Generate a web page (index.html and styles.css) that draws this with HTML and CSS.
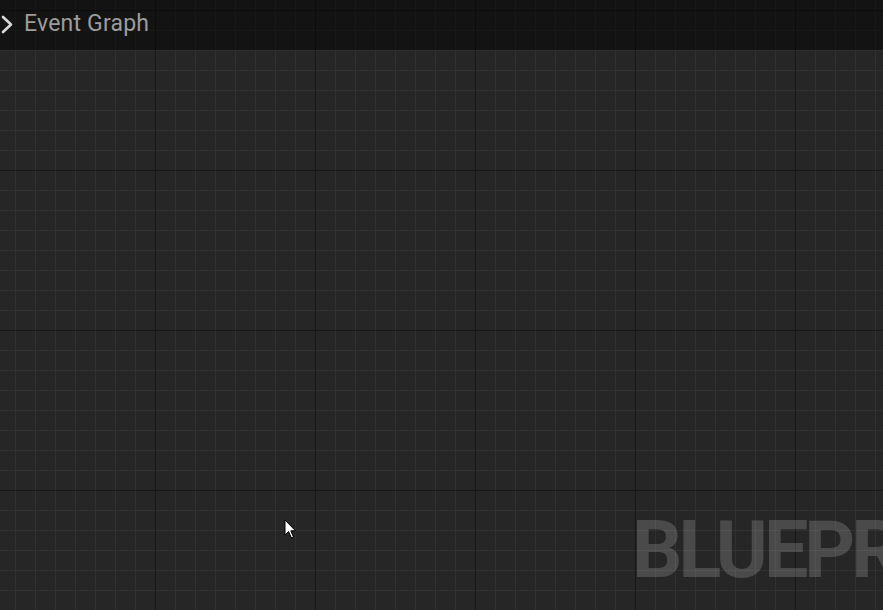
FILE: index.html
```html
<!DOCTYPE html>
<html>
<head>
<meta charset="utf-8">
<link rel="stylesheet" href="styles.css">
</head>
<body>
<div class="graph">
  <div class="titlebar">
    <svg class="chevron" width="14" height="22" viewBox="0 0 14 22"><polyline points="3,4 11,11.5 3,19" fill="none" stroke="#d8d8d8" stroke-width="2.6" stroke-linecap="round" stroke-linejoin="round"/></svg>
    <span class="title">Event Graph</span>
  </div>
  <div class="watermark">BLUEPRINT</div>
  <svg class="cursor" width="14" height="22" viewBox="0 0 14 22"><path d="M1 1 L1 16 L4.5 12.5 L7.5 19 L9.5 18 L6.8 11.8 L11.5 11.8 Z" fill="#fff" stroke="#000" stroke-width="1"/></svg>
</div>
</body>
</html>
```
FILE: styles.css
```css
html, body {
  margin: 0;
  padding: 0;
  background: #262626;
}
.graph {
  position: relative;
  width: 883px;
  height: 610px;
  overflow: hidden;
  background-color: #262626;
  background-image:
    linear-gradient(to right, #181818 1px, transparent 1px),
    linear-gradient(to bottom, #181818 1px, transparent 1px),
    linear-gradient(to right, #313131 1px, transparent 1px),
    linear-gradient(to bottom, #313131 1px, transparent 1px);
  background-size: 160px 100%, 100% 160px, 20px 100%, 100% 20px;
  background-position: 155px 0, 0 10px, 15px 0, 0 10px;
  font-family: Roboto, "Liberation Sans", sans-serif;
}
.titlebar {
  height: 50px;
  display: flex;
  align-items: center;
  gap: 8px;
  padding-bottom: 3px;
  box-sizing: border-box;
  background: rgba(0, 0, 0, 0.5);
}
.chevron {
  display: block;
}
.title {
  font-size: 23px;
  color: #9c9c9c;
  letter-spacing: 0.2px;
  margin-left: 2px;
}
.watermark {
  position: absolute;
  left: 632px;
  top: 500px;
  font-size: 79px;
  font-weight: 700;
  color: rgba(255, 255, 255, 0.17);
  white-space: nowrap;
  letter-spacing: -4px;
  line-height: 100px;
}
.cursor {
  position: absolute;
  left: 284px;
  top: 519px;
}
```
